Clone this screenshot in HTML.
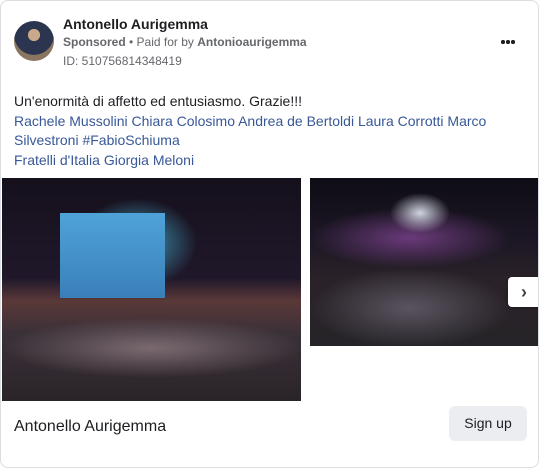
<!DOCTYPE html>
<html><head><meta charset="utf-8"><style>
body{margin:0;background:#fff;font-family:"Liberation Sans",Arial,sans-serif;}
.card{position:absolute;left:0;top:0;width:537px;height:466px;border:1px solid #dadde1;border-radius:8px;background:#fff;overflow:hidden;}
.av{position:absolute;left:13px;top:20px;width:40px;height:40px;border-radius:50%;background:radial-gradient(circle at 50% 35%,#c9a98a 0 18%,#2b3550 19% 60%,#8a7560 61%);}
.name{position:absolute;left:62px;top:15px;font-size:14px;font-weight:bold;color:#1c1e21;}
.sp{position:absolute;left:62px;top:34px;font-size:12px;color:#65676b;}
.id{position:absolute;left:62px;top:53px;font-size:12px;color:#65676b;}
.d{position:absolute;top:39px;width:3.5px;height:3.5px;border-radius:50%;background:#1c1e21}
.txt{position:absolute;left:13px;top:91px;font-size:14px;line-height:19.5px;color:#1c1e21;width:500px}
.txt .l{color:#385898}
.im1{position:absolute;left:1px;top:177px;width:299px;height:223px;background:
radial-gradient(ellipse 60px 45px at 135px 65px,#3fa0c0,transparent),
radial-gradient(ellipse 150px 30px at 150px 170px,#7a6a70,transparent),
linear-gradient(180deg,#15101c 0,#20182a 45%,#5a3838 55%,#3a3038 70%,#2a2428 100%);}
.scr{position:absolute;left:58px;top:35px;width:105px;height:85px;background:linear-gradient(180deg,#4fa3d8,#3a7fb8);}
.im2{position:absolute;left:309px;top:177px;width:230px;height:168px;background:
radial-gradient(ellipse 30px 20px at 110px 35px,#cfd4e0,transparent),
radial-gradient(ellipse 100px 30px at 100px 60px,#6a3a7a,transparent),
radial-gradient(ellipse 100px 40px at 100px 130px,#5a5460,transparent),
linear-gradient(180deg,#0e0c14 0,#1e1826 40%,#2a2228 60%,#262428 100%);}
.nx{position:absolute;left:507px;top:276px;width:32px;height:30px;background:#fff;border-radius:4px 0 0 4px;box-shadow:0 1px 3px rgba(0,0,0,.3);font-size:18px;color:#444;text-align:center;line-height:30px;font-weight:bold}
.ft{position:absolute;left:13px;top:417px;font-size:16px;color:#1c1e21}
.btn{position:absolute;left:448px;top:405px;width:78px;height:35px;border-radius:6px;background:#ebedf0;font-size:14px;color:#1c1e21;text-align:center;line-height:35px}
</style></head><body>
<div class="card">
<div class="av"></div>
<div class="name">Antonello Aurigemma</div>
<div class="sp"><b>Sponsored</b> • Paid for by <b>Antonioaurigemma</b></div>
<div class="id">ID: 510756814348419</div>
<div class="d" style="left:500px"></div><div class="d" style="left:505px"></div><div class="d" style="left:510px"></div>
<div class="txt">Un'enormità di affetto ed entusiasmo. Grazie!!!<br><span class="l">Rachele Mussolini Chiara Colosimo Andrea de Bertoldi Laura Corrotti Marco Silvestroni #FabioSchiuma<br>Fratelli d'Italia Giorgia Meloni</span></div>
<div class="im1"><div class="scr"></div></div>
<div class="im2"></div>
<div class="nx">›</div>
<div class="ft">Antonello Aurigemma</div>
<div class="btn">Sign up</div>
</div>
</body></html>
